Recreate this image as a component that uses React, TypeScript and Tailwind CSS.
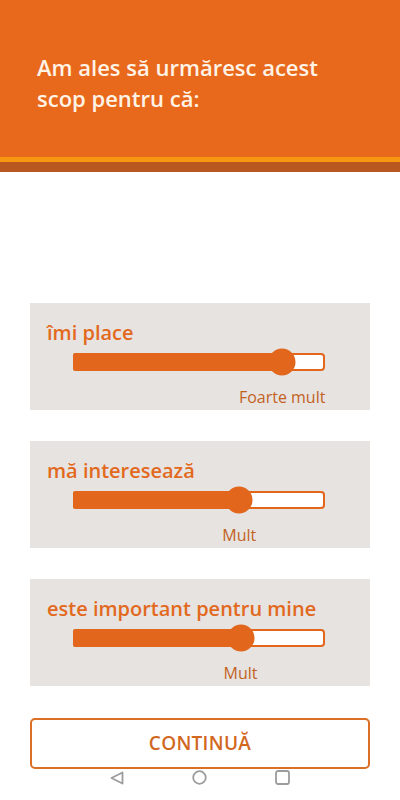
import React from "react";

const rows = [
  { label: "îmi place", pct: 83, value: "Foarte mult" },
  { label: "mă interesează", pct: 66, value: "Mult" },
  { label: "este important pentru mine", pct: 66.5, value: "Mult" },
];

function Row({ label, pct, value }: { label: string; pct: number; value: string }) {
  return (
    <div className="h-[107px] bg-[#E7E3E1] pt-[18px] pl-[17px]">
      <div className="text-[20px] leading-[24px] font-semibold text-[#E2691D]">{label}</div>
      <div className="relative ml-[26px] w-[252px] h-[18px] mt-[8px]">
        <div className="absolute inset-0 bg-white border-2 border-[#E2661C] rounded-[4px]" />
        <div
          className="absolute left-0 top-0 h-full bg-[#E2661C] rounded-l-[2px]"
          style={{ width: `${pct}%` }}
        />
        <div
          className="absolute top-1/2 w-[27px] h-[27px] rounded-full bg-[#E2661C] -translate-x-1/2 -translate-y-1/2"
          style={{ left: `${pct}%` }}
        />
      </div>
      <div className="relative ml-[26px] w-[252px] h-[20px] mt-[16px]">
        <span
          className="absolute top-0 -translate-x-1/2 whitespace-nowrap text-[16px] leading-[20px] font-medium text-[#C2621F]"
          style={{ left: `${pct}%` }}
        >
          {value}
        </span>
      </div>
    </div>
  );
}

export default function App() {
  return (
    <div
      className="w-[400px] h-[800px] bg-white flex flex-col overflow-hidden"
      style={{ fontFamily: '"Open Sans", "Noto Sans", sans-serif' }}
    >
      <div className="h-[157px] bg-[#E8691B] pt-[52px] px-[37px] text-[22px] leading-[31px] font-semibold text-[#FFF3E6]">
        Am ales să urmăresc acest
        <br />
        scop pentru că:
      </div>
      <div className="h-[5px] bg-[#F8960F]" />
      <div className="h-[10px] bg-[#B8571F]" />

      <div className="mt-[131px] px-[30px] flex flex-col gap-[31px]">
        {rows.map((r) => (
          <Row key={r.label} {...r} />
        ))}
      </div>

      <div className="mx-[30px] mt-[32px] h-[51px] border-2 border-[#DA6F25] rounded-[5px] flex items-center justify-center">
        <span className="text-[19px] font-semibold text-[#D2681F] tracking-[0.3px]">CONTINUĂ</span>
      </div>

      <div className="mt-[1px] flex justify-center items-center gap-[68px]">
        <svg width="14" height="14" viewBox="0 0 14 14">
          <path d="M12.5 1.5 L1.5 7 L12.5 12.5 Z" fill="none" stroke="#9C9C9C" strokeWidth="1.8" strokeLinejoin="round" />
        </svg>
        <svg width="15" height="15" viewBox="0 0 15 15">
          <circle cx="7.5" cy="7.5" r="6.3" fill="none" stroke="#9C9C9C" strokeWidth="1.8" />
        </svg>
        <svg width="15" height="15" viewBox="0 0 15 15">
          <rect x="1" y="1" width="13" height="13" rx="2" fill="none" stroke="#9C9C9C" strokeWidth="1.8" />
        </svg>
      </div>
    </div>
  );
}
